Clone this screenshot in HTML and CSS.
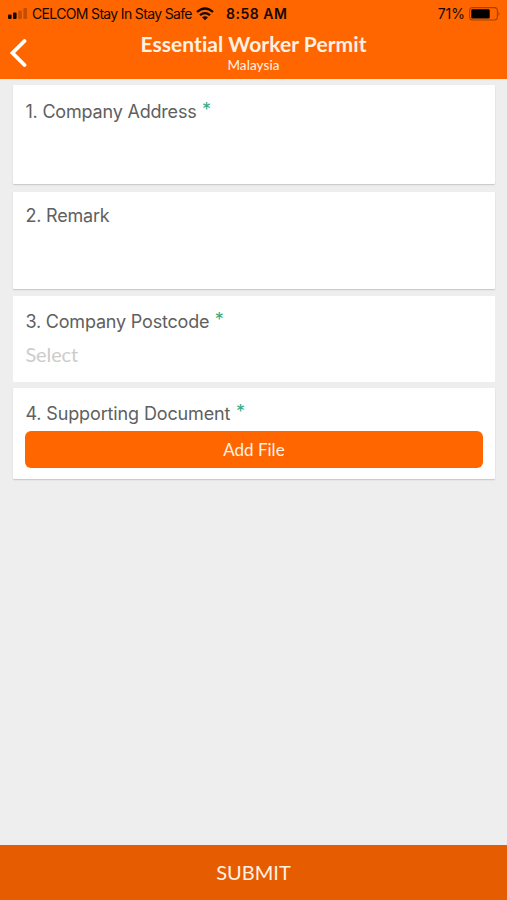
FILE: index.html
```html
<!DOCTYPE html>
<html lang="en">
<head>
<meta charset="utf-8">
<title>Essential Worker Permit</title>
<link rel="stylesheet" href="styles.css">
</head>
<body>
<header class="top">
  <div class="status">
    <svg class="signal" width="20" height="12" viewBox="0 0 20 12"><rect y="6.5" width="3.6" height="4.5" rx="1"/><rect x="5" y="4.5" width="3.6" height="6.5" rx="1"/><g opacity=".25"><rect x="10.2" y="2.5" width="3.6" height="8.5" rx="1"/><rect x="15.4" y="0" width="3.6" height="11" rx="1"/></g></svg>
    <span class="carrier">CELCOM Stay In Stay Safe</span>
    <svg class="wifi" width="18" height="14" viewBox="0 0 18 14"><g fill="none" stroke="#160800" stroke-width="2.3"><path d="M1 5Q9-2 17 5"/><path d="M4 8.2Q9 4 14 8.2"/></g><path d="M6 10.3Q9 8 12 10.3L9 13.3Z"/></svg>
    <span class="time">8:58 AM</span>
    <span class="percent">71%</span>
    <svg class="battery" width="32" height="14" viewBox="0 0 32 14"><rect x=".6" y=".6" width="27.8" height="12.4" rx="3" fill="none" stroke="#a54300" stroke-width="1.1"/><rect x="2.3" y="2.2" width="18.4" height="9.2" rx="1.2"/><path d="M29.5 4.5Q31.5 6.8 29.5 9Z" fill="#a54300"/></svg>
  </div>
  <div class="nav">
    <svg class="back" width="18" height="30" viewBox="0 0 18 30"><path d="M15.5 3L3.5 15L15.5 27" fill="none" stroke="#fff" stroke-width="3.8" stroke-linecap="round"/></svg>
    <div class="heading">
      <h1 class="title">Essential Worker Permit</h1>
      <p class="subtitle">Malaysia</p>
    </div>
  </div>
</header>
<main class="form">
  <section class="card address"><h2 class="label"><span>1. Company Address</span> <span class="required">*</span></h2></section>
  <section class="card remark"><h2 class="label"><span>2. Remark</span></h2></section>
  <section class="card postcode"><h2 class="label"><span>3. Company Postcode</span> <span class="required">*</span></h2><div class="select">Select</div></section>
  <section class="card document"><h2 class="label"><span>4. Supporting Document</span> <span class="required">*</span></h2><button class="add">Add File</button></section>
</main>
<button class="submit">SUBMIT</button>
</body>
</html>
```
FILE: styles.css
```css
* { box-sizing: border-box; }
body { margin: 0; height: 900px; display: flex; flex-direction: column; background: #eee; font-family: Lato, sans-serif; overflow: hidden; }
h1, h2, p { margin: 0; font-weight: 400; }
button { border: 0; padding: 0; color: #fff2e5; font-family: Lato, sans-serif; }
svg { display: block; flex: none; }
.top { height: 79px; flex: none; background: #f60; }
.status { height: 27px; display: flex; align-items: center; padding: 0 6px 0 8px; font-family: Inter, sans-serif; font-size: 14px; color: #160800; white-space: nowrap; }
.signal { margin-right: 4px; fill: #160800; }
.carrier { width: 161px; letter-spacing: -.66px; }
.wifi { margin-left: 3px; fill: #160800; }
.time { margin-left: 12px; font-weight: 600; letter-spacing: .5px; }
.percent { margin-left: auto; letter-spacing: 0; }
.battery { margin-left: 4px; }
.nav { height: 52px; display: grid; grid-template-columns: 40px 1fr 40px; }
.back { margin: 11px 0 0 9px; }
.heading { text-align: center; color: #fff2e5; }
.title { margin-top: 4px; font-size: 21px; font-weight: 700; line-height: 26px; letter-spacing: .06px; }
.subtitle { font-size: 13.5px; line-height: 16px; letter-spacing: .1px; }
.form { flex: 1; padding: 6px 12px 0 13px; }
.card { background: #fff; padding: 0 12.5px 0 12.4px; border-radius: 1px; box-shadow: 0 1px 1.5px #c4c4c4; }
.address { height: 99px; padding-top: 15px; margin-bottom: 8px; }
.remark { height: 97px; padding-top: 12px; margin-bottom: 7px; }
.postcode { height: 86px; padding-top: 14px; margin-bottom: 6px; box-shadow: none; }
.document { height: 91px; padding-top: 14px; }
.label { height: 24px; display: flex; gap: 5.5px; font-family: Inter, sans-serif; font-size: 18px; line-height: 24px; letter-spacing: -.19px; color: #606060; white-space: nowrap; }
.document .label { letter-spacing: -.13px; }
.required { margin-top: -2px; color: #35aa85; }
.select { margin-top: 8px; font-size: 20px; line-height: 24px; letter-spacing: -.1px; color: #ccc; }
.add { display: block; width: 100%; height: 37px; margin-top: 5px; border-radius: 6px; background: #f60; font-size: 17px; line-height: 37px; }
.submit { height: 55px; flex: none; padding-bottom: 1px; background: #e65c00; font-size: 20px; }
```
